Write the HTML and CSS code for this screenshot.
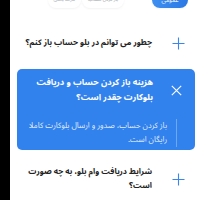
FILE: index.html
```html
<!DOCTYPE html>
<html lang="fa" dir="rtl">
<head>
<meta charset="utf-8">
<link rel="stylesheet" href="styles.css">
</head>
<body>
<div class="screen">
  <div class="tabs">
    <div class="tab tab-active">عمومی</div>
    <div class="tab">باز کردن حساب</div>
    <div class="tab">کارت بانکی</div>
  </div>
  <div class="faq">
    <div class="item">
      <span class="icon"><svg width="13" height="13" viewBox="0 0 13 13"><path d="M6.5 0.5V12.5M0.5 6.5H12.5" stroke="#3a86ee" stroke-width="1.1" fill="none"/></svg></span>
      <span class="q">چطور می توانم در بلو حساب باز کنم؟</span>
    </div>
    <div class="item item-open">
      <div class="item-head">
        <span class="icon"><svg width="11" height="11" viewBox="0 0 11 11"><path d="M0.8 0.8L10.2 10.2M10.2 0.8L0.8 10.2" stroke="#fff" stroke-width="1.1" fill="none"/></svg></span>
        <span class="q">هزینه باز کردن حساب و دریافت<br>بلوکارت چقدر است؟</span>
      </div>
      <div class="answer">باز کردن حساب، صدور و ارسال بلوکارت کاملا<br>رایگان است.</div>
    </div>
    <div class="item item-last">
      <span class="icon"><svg width="13" height="13" viewBox="0 0 13 13"><path d="M6.5 0.5V12.5M0.5 6.5H12.5" stroke="#3a86ee" stroke-width="1.1" fill="none"/></svg></span>
      <span class="q">شرایط دریافت وام بلو، به چه صورت<br>است؟</span>
    </div>
  </div>
</div>
</body>
</html>
```
FILE: styles.css
```css
html, body {
  margin: 0;
  padding: 0;
  background: #000;
}
.screen {
  width: 190px;
  height: 200px;
  margin-left: 5px;
  background: #fff;
  overflow: hidden;
  direction: rtl;
  font-family: "Noto Sans Arabic", "Vazirmatn", "DejaVu Sans", sans-serif;
}
.tabs {
  display: flex;
  gap: 1px;
  margin-top: -8px;
  padding-right: 12px;
  height: 16px;
}
.tab {
  height: 16px;
  line-height: 16px;
  padding: 0 6px;
  font-size: 4.9px;
  color: #a3a8ad;
  border-radius: 8px;
  background: #fff;
  box-shadow: 0 1px 2px rgba(0,0,0,0.05);
  white-space: nowrap;
}
.tab-active {
  width: 36px;
  padding: 0;
  margin-left: 27px;
  text-align: center;
  color: #fff;
  font-size: 6px;
  background: linear-gradient(90deg, #3f8ff0, #2a78e4);
}
.faq {
  display: flex;
  flex-direction: column;
  gap: 6px;
  margin-top: 15px;
  padding: 0 5px 0 7px;
}
.item {
  display: flex;
  align-items: center;
  gap: 20px;
  min-height: 40px;
  box-sizing: border-box;
  padding: 7px 10px;
}
.item-last {
  padding-top: 9px;
}
.icon {
  width: 13px;
  flex: none;
  display: flex;
  justify-content: center;
}
.q {
  font-size: 8px;
  font-weight: bold;
  line-height: 14px;
  color: #222;
  white-space: nowrap;
}
.item-open {
  display: block;
  background: #3182ed;
  border-radius: 5px;
  padding: 6px 12px 3px 10px;
}
.item-head {
  display: flex;
  align-items: center;
  gap: 17px;
}
.item-open .q {
  font-size: 8.6px;
  color: #fff;
  line-height: 15px;
}
.answer {
  margin-top: 14px;
  margin-right: 6px;
  border-right: 1px solid rgba(255,255,255,0.3);
  padding-right: 9px;
  font-size: 7.8px;
  line-height: 14px;
  color: rgba(255,255,255,0.88);
  white-space: nowrap;
}
```
